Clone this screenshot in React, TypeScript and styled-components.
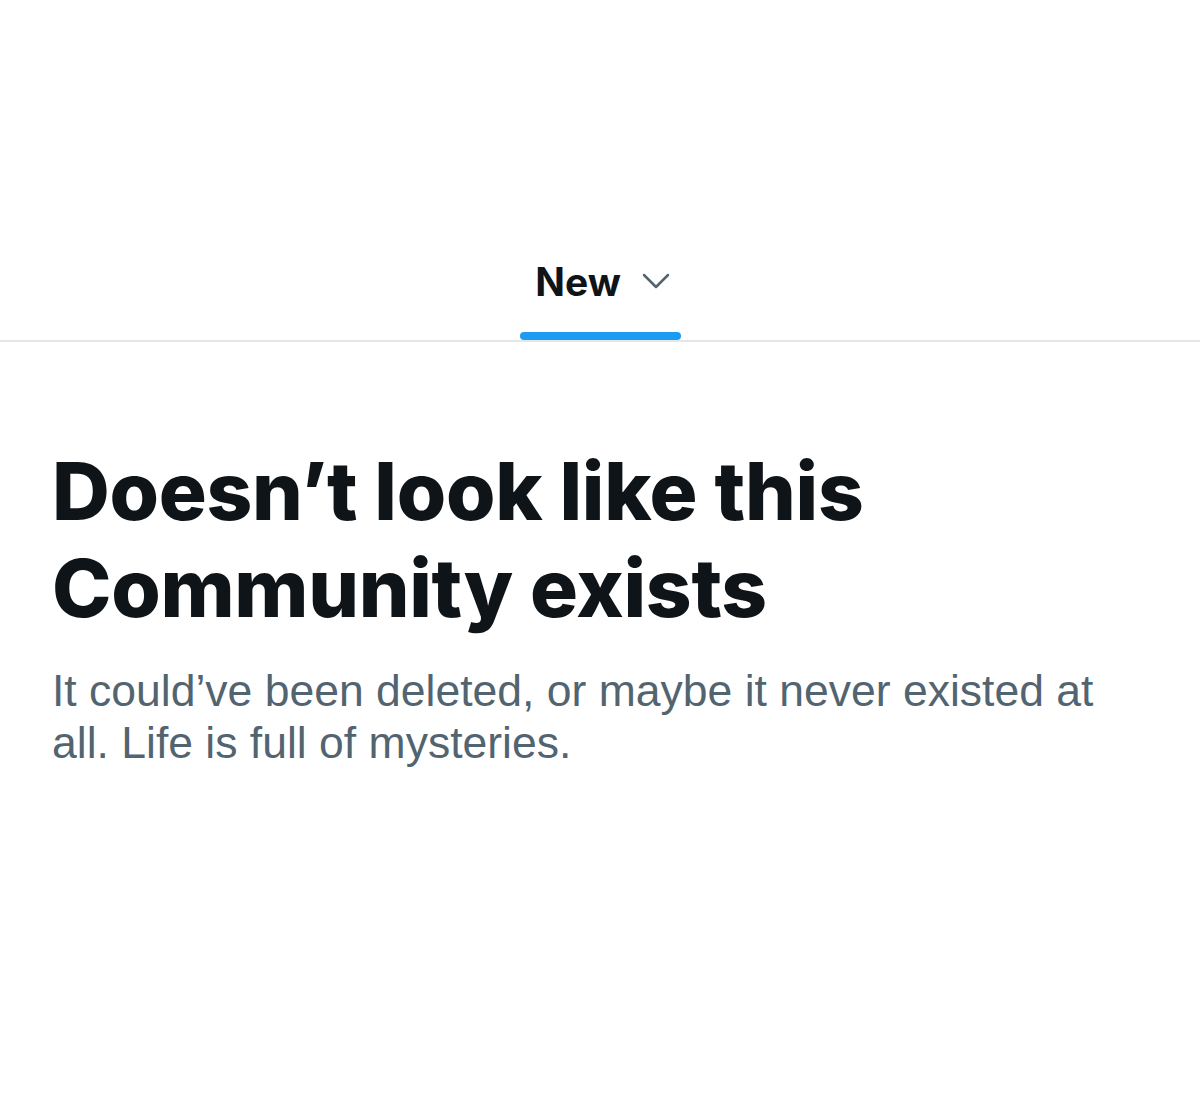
import React from "react";
import styled, { createGlobalStyle } from "styled-components";

const Global = createGlobalStyle`
  html, body { margin: 0; padding: 0; background: #ffffff; }
  body { font-family: Inter, "Liberation Sans", Arial, sans-serif; }
`;

const Page = styled.div`
  width: 1200px;
  height: 1118px;
  background: #ffffff;
  display: flex;
  flex-direction: column;
`;

const TabBar = styled.div`
  margin-top: 240px;
  display: flex;
  justify-content: center;
  border-bottom: 2px solid #e4e6e8;
`;

const Tab = styled.div`
  display: flex;
  flex-direction: column;
  align-items: center;
`;

const TabLabel = styled.div`
  display: flex;
  align-items: center;
  gap: 20px;
  height: 82px;
  padding-bottom: 10px;
  padding-left: 6px;
  font-family: Inter, "Liberation Sans", Arial, sans-serif;
  font-weight: 700;
  font-size: 39px;
  color: #0f1419;
`;

const Indicator = styled.div`
  width: 161px;
  height: 8px;
  border-radius: 4px;
  background: #1d9bf0;
`;

const Content = styled.div`
  padding: 100px 52px 0 52px;
`;

const Title = styled.h1`
  margin: 0;
  font-family: Inter, "Liberation Sans", sans-serif;
  font-weight: 800;
  font-size: 80px;
  line-height: 97px;
  letter-spacing: -0.3px;
  color: #0f1419;
`;

const Subtitle = styled.p`
  margin: 29px 0 0 0;
  font-family: "Liberation Sans", Arial, sans-serif;
  font-size: 44.5px;
  line-height: 52px;
  color: #536471;
`;

const Chevron = () => (
  <svg width="30" height="18" viewBox="0 0 30 18" fill="none">
    <path d="M3 3l12 12 12-12" stroke="#536471" strokeWidth="2.5" strokeLinecap="round" strokeLinejoin="round" />
  </svg>
);

export default function App() {
  return (
    <Page>
      <Global />
      <TabBar>
        <Tab>
          <TabLabel>
            New
            <Chevron />
          </TabLabel>
          <Indicator />
        </Tab>
      </TabBar>
      <Content>
        <Title>
          Doesn’t look like this
          <br />
          Community exists
        </Title>
        <Subtitle>
          It could’ve been deleted, or maybe it never existed at all. Life is full of mysteries.
        </Subtitle>
      </Content>
    </Page>
  );
}
